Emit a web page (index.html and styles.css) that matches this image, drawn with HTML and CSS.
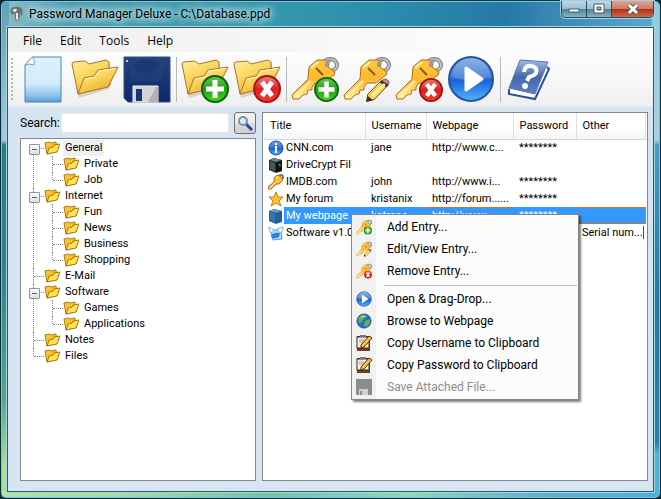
FILE: index.html
```
<!DOCTYPE html>
<html lang="en">
<head>
<meta charset="utf-8">
<title>Password Manager Deluxe</title>
<link rel="stylesheet" href="styles.css">
</head>
<body>

<svg class="defs" aria-hidden="true">
  <defs>
    <linearGradient id="gGold" x1="0" y1="0" x2="0.6" y2="1"><stop offset="0" stop-color="#fff0a0"/><stop offset=".5" stop-color="#fbd55e"/><stop offset="1" stop-color="#e9a92b"/></linearGradient>
    <linearGradient id="gKey" x1="0" y1="0" x2="0" y2="1"><stop offset="0" stop-color="#ffc83c"/><stop offset=".5" stop-color="#fdb92f"/><stop offset="1" stop-color="#fff0a0"/></linearGradient>
    <linearGradient id="gPage" x1="0" y1="0" x2="0" y2="1"><stop offset="0" stop-color="#dcf1fb"/><stop offset=".6" stop-color="#d0ecfb"/><stop offset=".85" stop-color="#8fc3ee"/><stop offset="1" stop-color="#5a9ddb"/></linearGradient>
    <linearGradient id="gNavy" x1="0" y1="0" x2="0" y2="1"><stop offset="0" stop-color="#24427f"/><stop offset="1" stop-color="#0b2768"/></linearGradient>
    <linearGradient id="gBook" x1="0" y1="0" x2="0" y2="1"><stop offset="0" stop-color="#9dbbe4"/><stop offset=".5" stop-color="#4668ac"/><stop offset="1" stop-color="#5d80c4"/></linearGradient>
    <linearGradient id="gPlay" x1="0" y1="0" x2="0" y2="1"><stop offset="0" stop-color="#7ba8e6"/><stop offset=".48" stop-color="#3473d0"/><stop offset=".52" stop-color="#1561dc"/><stop offset="1" stop-color="#52b4fb"/></linearGradient>
    <linearGradient id="gGreen" x1="0" y1="0" x2="0" y2="1"><stop offset="0" stop-color="#6cc862"/><stop offset=".5" stop-color="#20a010"/><stop offset="1" stop-color="#46d81c"/></linearGradient>
    <linearGradient id="gRed" x1="0" y1="0" x2="0" y2="1"><stop offset="0" stop-color="#f08080"/><stop offset=".5" stop-color="#dd2020"/><stop offset="1" stop-color="#fb3a30"/></linearGradient>
  </defs>

  <symbol id="folder" viewBox="0 0 48 48">
    <path d="M2 9 L15 6 L19 9 L38 5 L39 12 L46 12 L38 33 L8 42 Z" fill="#7c4a10" opacity=".2" transform="translate(0 1)"/>
    <path d="M1 9 Q1 7 3 7 L14 6 L18 9 L35 5 L38 7 L39 30 L7 39 Z" fill="url(#gGold)" stroke="#a9742a"/>
    <path d="M7 39 L13 23 L23 21 L27 15 L47 12 L37 32 Z" fill="url(#gGold)" stroke="#a9742a"/>
    <path d="M14 24 L24 22 L28 16 L45 13.500" fill="none" stroke="#fff8cc"/>
  </symbol>

  <symbol id="folderSmall" viewBox="0 0 16 16">
    <path d="M1 3 L5 2 L7 3 L12 2 L13 11 L3 14 Z" fill="#f6c62c" stroke="#b07818"/>
    <path d="M3 14 L5 8 L9 7 L10 5 L16 4 L13 12 Z" fill="#ffe34e" stroke="#a9701a"/>
  </symbol>

  <symbol id="key" viewBox="0 0 48 48">
    <ellipse cx="39" cy="10" rx="7" ry="6" fill="none" stroke="#777" stroke-width="4"/>
    <ellipse cx="39" cy="10" rx="7" ry="6" fill="none" stroke="#c6c6c6" stroke-width="2"/>
    <path d="M18 12 L26 5 L35 5 L38 8 L37 12 L44 17 L43 20 L33 28 L24 28 L21 32 L21 35 L17 35 L16 39 L12 40 L8 44 L2 44 L1 40 L17 24 Z" fill="url(#gKey)" stroke="#b4691a"/>
    <path d="M25 13 L32 20" stroke="#8a5a20" stroke-width="2"/>
    <path d="M4 42 L20 26 M20 13 L27 7" stroke="#fff3b0" stroke-width="2"/>
    <path d="M36 12 Q34 7 40 5" fill="none" stroke="#999" stroke-width="3"/>
  </symbol>

  <symbol id="keySmall" viewBox="0 0 16 16">
    <ellipse cx="13" cy="3" rx="2" ry="2" fill="none" stroke="#777" stroke-width="2"/>
    <path d="M6 4 L9 1 L12 2 L15 6 L11 10 L8 10 L3 15 L0 15 L0 13 L6 8 Z" fill="#fcbc3c" stroke="#b06a1c"/>
    <path d="M2 14 L7 9 M8 4 L10 3" stroke="#fff0a0"/>
  </symbol>

  <symbol id="plus" viewBox="0 0 28 28">
    <circle cx="14" cy="14" r="13" fill="url(#gGreen)" stroke="#0a6410" stroke-width="2"/>
    <path d="M14 5 V23 M5 14 H23" stroke="#fff" stroke-width="5"/>
  </symbol>

  <symbol id="cross" viewBox="0 0 28 28">
    <circle cx="14" cy="14" r="13" fill="url(#gRed)" stroke="#a81018" stroke-width="2"/>
    <path d="M9 7 L19 21 M19 7 L9 21" stroke="#fff" stroke-width="5"/>
  </symbol>

  <symbol id="pencil" viewBox="0 0 28 28">
    <path d="M2 19 L18 3 L26 8 L10 25 L1 27 Z" fill="#fbd052" stroke="#4a3a18"/>
    <path d="M18 3 L23 1 L27 4 L26 8 Z" fill="#d88" stroke="#555"/>
    <path d="M16 5 L18 3 L26 8 L24 11 Z" fill="#333"/>
    <path d="M7 21 L22 7" stroke="#fff2a0" stroke-width="3"/>
    <path d="M0 28 L2 21 L8 26 Z" fill="#332c22"/>
  </symbol>

  <symbol id="keyAdd" viewBox="0 0 48 48"><use href="#key" width="48" height="48"/><use href="#plus" x="23" y="22" width="25" height="25"/></symbol>
  <symbol id="keyEdit" viewBox="0 0 48 48"><use href="#key" width="48" height="48"/><use href="#pencil" x="23" y="23" width="24" height="24"/></symbol>
  <symbol id="keyDel" viewBox="0 0 48 48"><use href="#key" width="48" height="48"/><use href="#cross" x="24" y="23" width="24" height="24"/></symbol>

  <symbol id="play" viewBox="0 0 48 48">
    <circle cx="24" cy="24" r="22" fill="url(#gPlay)" stroke="#25549f" stroke-width="2"/>
    <path d="M5 22 A19 19 0 0 1 43 22 Q24 29 5 22 Z" fill="#fff" opacity=".15"/>
    <path d="M19 13 L35 24 L19 35 Z" fill="#fff" stroke="#fff" stroke-width="3" stroke-linejoin="round"/>
  </symbol>

  <symbol id="floppy" viewBox="0 0 48 48">
    <path d="M1 2 H47 V47 H5 L1 43 Z" fill="url(#gNavy)" stroke="#31507f"/>
    <path d="M8 3 H40 V27 H8 Z" fill="#27477e" opacity=".4"/>
    <ellipse cx="24" cy="11" rx="13" ry="7" fill="#1d3974"/>
    <rect x="3" y="5" width="2" height="2" fill="#ccd"/>
    <path d="M10 31 H35 V47 H10 Z" fill="#d4d4d4" stroke="#eee"/>
    <rect x="13" y="34" width="6" height="12" fill="#1a3577"/>
    <path d="M25 47 L33 32 H35 V47 Z" fill="#b2b2b2"/>
  </symbol>

  <symbol id="floppyGray" viewBox="0 0 16 16">
    <path d="M0 0 H16 V16 H1 L0 15 Z" fill="#8c8c8c"/>
    <rect x="3" y="10" width="9" height="6" fill="#d2d2d2"/><rect x="4" y="12" width="2" height="4" fill="#8c8c8c"/>
  </symbol>

  <symbol id="safe" viewBox="0 0 16 16">
    <path d="M1 3 L6 1 L14 3 L14 14 L8 16 L1 13 Z" fill="#222e30"/>
    <path d="M2 4 L7 6 V14 L2 12 Z" fill="#46565a"/>
    <path d="M8 6 L14 4 V14 L8 15 Z" fill="#0b1112"/>
    <path d="M2 3 L6 1 L13 3 L8 5 Z" fill="#718084"/>
    <path d="M10 8 L12 7 V10" stroke="#4b9361" fill="none"/>
  </symbol>

  <symbol id="clip" viewBox="0 0 16 16">
    <rect x="1" y="1" width="13" height="15" fill="#6c3f20"/>
    <rect x="1" y="2" width="12" height="11" fill="#f7f3ea" stroke="#3d2616"/>
    <rect x="4" y="0" width="6" height="2" fill="#777"/>
    <path d="M3 5 H8 M3 7 H7" stroke="#999"/>
    <path d="M5 10 L13 1 L16 3 L8 12 L5 13 Z" fill="#fbc634" stroke="#3f2c10"/>
  </symbol>
</svg>

<div class="window">
  <header class="titlebar">
    <svg class="app-icon" viewBox="0 0 16 16"><path d="M1 5 Q2 1 6 1 Q10 0 13 3 L14 8 L12 10 L11 6 L10 15 L6 15 L6 7 L3 9 Z" fill="#6b7072"/><path d="M3 5 Q5 2 8 3 L7 6 Z M7 7 H9 V13 H7 Z" fill="#e6e9e9"/><path d="M5 13 H11 V16 H5 Z" fill="#9aa0a2"/></svg>
    <h1 class="title">Password Manager Deluxe - C:\Database.ppd</h1>
    <div class="controls">
      <button class="control" aria-label="Minimize"><svg viewBox="0 0 14 12"><rect x="2" y="6" width="10" height="3" fill="#fff" stroke="#555a66"/></svg></button>
      <button class="control" aria-label="Maximize"><svg viewBox="0 0 14 12"><path d="M2 1 H12 V10 H2 Z M5 4 V7 H9 V4 Z" fill="#fff" fill-rule="evenodd" stroke="#4f5664"/></svg></button>
      <button class="control close" aria-label="Close"><svg viewBox="0 0 14 12"><path d="M3 2 L11 10 M11 2 L3 10" stroke="#555" stroke-width="5"/><path d="M3 2 L11 10 M11 2 L3 10" stroke="#fff" stroke-width="3"/></svg></button>
    </div>
  </header>

  <div class="client">
    <nav class="menubar">
      <button>File</button>
      <button>Edit</button>
      <button>Tools</button>
      <button>Help</button>
    </nav>

    <div class="toolbar">
      <span class="grip"></span>
      <button class="tool" aria-label="New database"><svg viewBox="0 0 48 48"><path d="M13 2 H42 V47 H6 V10 Z" fill="url(#gPage)" stroke="#4c86b4"/><path d="M13 2 Q17 5 15 10 Q10 8 6 10 Z" fill="#fff" stroke="#6da2c8"/></svg></button>
      <button class="tool" aria-label="Open database"><svg><use href="#folder"/></svg></button>
      <button class="tool" aria-label="Save database"><svg><use href="#floppy"/></svg></button>
      <span class="divider"></span>
      <button class="tool" aria-label="Add folder"><svg viewBox="0 0 48 48"><use href="#folder" width="48" height="48"/><use href="#plus" x="20" y="20" width="28" height="28"/></svg></button>
      <button class="tool" aria-label="Remove folder"><svg viewBox="0 0 48 48"><use href="#folder" width="48" height="48"/><use href="#cross" x="20" y="20" width="28" height="28"/></svg></button>
      <span class="divider"></span>
      <button class="tool" aria-label="Add entry"><svg><use href="#keyAdd"/></svg></button>
      <button class="tool" aria-label="Edit entry"><svg><use href="#keyEdit"/></svg></button>
      <button class="tool" aria-label="Remove entry"><svg><use href="#keyDel"/></svg></button>
      <button class="tool" aria-label="Open"><svg><use href="#play"/></svg></button>
      <span class="divider"></span>
      <button class="tool" aria-label="Help"><svg viewBox="0 0 48 48">
        <path d="M4 34 L4 39 L30 44 L44 14 L42 12" fill="#fff" stroke="#2d4f94" stroke-width="2"/>
        <path d="M15 5 L43 7 L30 39 L4 33 Z" fill="url(#gBook)" stroke="#5577b4"/>
        <path d="M19 17 Q20 10 26 11 Q33 12 31 18 Q29 21 24 22 L22 26" fill="none" stroke="#fff" stroke-width="4"/><circle cx="20" cy="31" r="3" fill="#fff"/></svg></button>
    </div>

    <main class="body">
      <section class="side">
        <div class="search">
          <label for="search">Search:</label>
          <input id="search" type="text">
          <button aria-label="Search"><svg viewBox="0 0 18 18"><path d="M10 10 L16 16" stroke="#1c4a9c" stroke-width="3"/><circle cx="7" cy="7" r="4" fill="#cfeafa" stroke="#7892a8" stroke-width="2"/><path d="M5 7 Q5 5 7 5" stroke="#fff" fill="none"/></svg></button>
        </div>
        <ul class="tree">
          <li class="open"><div class="node current"><svg><use href="#folderSmall"/></svg><span>General</span></div>
            <ul>
              <li><div class="node"><svg><use href="#folderSmall"/></svg><span>Private</span></div></li>
              <li><div class="node"><svg><use href="#folderSmall"/></svg><span>Job</span></div></li>
            </ul>
          </li>
          <li class="open"><div class="node"><svg><use href="#folderSmall"/></svg><span>Internet</span></div>
            <ul>
              <li><div class="node"><svg><use href="#folderSmall"/></svg><span>Fun</span></div></li>
              <li><div class="node"><svg><use href="#folderSmall"/></svg><span>News</span></div></li>
              <li><div class="node"><svg><use href="#folderSmall"/></svg><span>Business</span></div></li>
              <li><div class="node"><svg><use href="#folderSmall"/></svg><span>Shopping</span></div></li>
            </ul>
          </li>
          <li><div class="node"><svg><use href="#folderSmall"/></svg><span>E-Mail</span></div></li>
          <li class="open"><div class="node"><svg><use href="#folderSmall"/></svg><span>Software</span></div>
            <ul>
              <li><div class="node"><svg><use href="#folderSmall"/></svg><span>Games</span></div></li>
              <li><div class="node"><svg><use href="#folderSmall"/></svg><span>Applications</span></div></li>
            </ul>
          </li>
          <li><div class="node"><svg><use href="#folderSmall"/></svg><span>Notes</span></div></li>
          <li><div class="node"><svg><use href="#folderSmall"/></svg><span>Files</span></div></li>
        </ul>
      </section>

      <section class="list">
        <table>
          <colgroup><col class="c-title"><col class="c-user"><col class="c-web"><col class="c-pass"><col></colgroup>
          <thead>
            <tr><th>Title</th><th>Username</th><th>Webpage</th><th>Password</th><th>Other</th></tr>
          </thead>
          <tbody>
            <tr><td><div class="entry"><svg viewBox="0 0 16 16"><circle cx="8" cy="8" r="7" fill="url(#gPlay)" stroke="#1748a0"/><path d="M8 3 V5 M8 6 V13" stroke="#fff" stroke-width="2"/></svg><span>CNN.com</span></div></td><td>jane</td><td>http://www.c...</td><td>********</td><td></td></tr>
            <tr><td><div class="entry"><svg><use href="#safe"/></svg><span>DriveCrypt Fil</span></div></td><td></td><td></td><td></td><td></td></tr>
            <tr><td><div class="entry"><svg><use href="#keySmall"/></svg><span>IMDB.com</span></div></td><td>john</td><td>http://www.i...</td><td>********</td><td></td></tr>
            <tr><td><div class="entry"><svg viewBox="0 0 16 16"><path d="M8 1 L10 6 L15 6 L11 10 L13 15 L8 12 L3 15 L5 10 L1 6 L6 6 Z" fill="#fdc72e" stroke="#cf7d12"/></svg><span>My forum</span></div></td><td>kristanix</td><td>http://forum......</td><td>********</td><td></td></tr>
            <tr class="selected"><td><div class="entry"><svg viewBox="0 0 16 16"><path d="M1 3 L6 1 L14 3 L14 14 L8 16 L1 13 Z" fill="#21619e"/><path d="M2 4 L7 6 V14 L2 12 Z" fill="#3978ad"/><path d="M2 3 L6 1 L13 3 L8 5 Z" fill="#5a9cca"/></svg><span>My webpage</span></div></td><td>katrena</td><td>http://www...</td><td>********</td><td></td></tr>
            <tr><td><div class="entry"><svg viewBox="0 0 16 16"><path d="M2 5 L13 5 L14 14 L5 15 Z" fill="#b9dcf6" stroke="#5f9ed6"/><path d="M1 2 L6 5 L4 8 L1 5 Z M15 2 L9 4 L12 8 L15 5 Z" fill="#eef6fc" stroke="#8ab4d4"/><path d="M3 10 Q7 7 12 8 L11 12 Q7 14 4 13 Z" fill="#2382dc"/></svg><span>Software v1.0</span></div></td><td></td><td></td><td></td><td><span class="caret">Serial num...</span></td></tr>
          </tbody>
        </table>

        <menu class="context">
          <li><button><svg><use href="#keyAdd"/></svg>Add Entry...</button></li>
          <li><button><svg><use href="#keyEdit"/></svg>Edit/View Entry...</button></li>
          <li><button><svg><use href="#keyDel"/></svg>Remove Entry...</button></li>
          <li class="rule"></li>
          <li><button><svg><use href="#play"/></svg>Open &amp; Drag-Drop...</button></li>
          <li><button><svg viewBox="0 0 16 16"><circle cx="8" cy="8" r="7" fill="#2b6ec6" stroke="#2a56a0"/><path d="M2 6 Q5 1 9 2 L11 4 L7 6 L6 9 L3 10 Z M9 8 L14 6 L14 10 L10 14 L8 12 Z" fill="#5cb457"/><path d="M5 4 L9 3" stroke="#cfe9e0"/></svg>Browse to Webpage</button></li>
          <li><button><svg><use href="#clip"/></svg>Copy Username to Clipboard</button></li>
          <li><button><svg><use href="#clip"/></svg>Copy Password to Clipboard</button></li>
          <li><button disabled><svg><use href="#floppyGray"/></svg>Save Attached File...</button></li>
        </menu>
      </section>
    </main>
  </div>
</div>

</body>
</html>
```
FILE: styles.css
```
* {
  box-sizing: border-box;
}

body {
  margin: 0;
  background: #10242c;
  font-family: Roboto, "Open Sans", sans-serif;
  font-size: 12px;
  color: #000;
}

button {
  margin: 0;
  padding: 0;
  border: 0;
  background: none;
  font: inherit;
  color: inherit;
}

svg {
  display: block;
}

.defs {
  position: absolute;
  width: 0;
  height: 0;
}

/* window frame */
.window {
  display: flex;
  flex-direction: column;
  height: 100vh;
  padding: 0 6px 6px;
  border: 1px solid #0d2c38;
  border-bottom-color: #123;
  border-radius: 6px;
  box-shadow: inset 0 0 0 1px #5bd0ee;
  background:
    linear-gradient(90deg, #b0e59a, #a5dba0 20%, #74c5a4 40%, #7ccbbb 50%, #8ddab5 62%, #5fafd0 82%, #4ab0dc) bottom / 100% 8px no-repeat,
    linear-gradient(180deg, #5f9fb8, #a8cbdb 28%, #1f7f8c 29%, #2c8589 55%, #58a688 80%, #a9e296 94%) left / 8px 100% no-repeat,
    linear-gradient(180deg, #8fcbe2, #a9cfe2 28%, #3fa0ca 29%, #1a7ba5 60%, #2484ae 89%, #4bb4e0 91%) right / 8px 100% no-repeat,
    linear-gradient(95deg, #8dbfc8, #4d9fae 10%, #399aac 35%, #2d91ae 50%, #2679a6 72%, #5aa5cb 92%, #6fbfe0);
}

.titlebar {
  display: flex;
  align-items: center;
  height: 26px;
  flex: none;
}

.app-icon {
  width: 16px;
  height: 16px;
  margin-left: 2px;
}

.title {
  flex: 1;
  margin: 0 0 0 4px;
  font-size: 12px;
  font-weight: 400;
  text-shadow: 0 0 6px #d5ecf2, 0 0 8px #d5ecf2, 0 0 10px #d5ecf2;
}

.controls {
  display: flex;
  align-self: flex-start;
  border: 1px solid #2c4a5c;
  border-top: 0;
  border-radius: 0 0 5px 5px;
  overflow: hidden;
  box-shadow: 0 0 0 1px #9fd0e4;
}

.control {
  display: flex;
  align-items: center;
  justify-content: center;
  width: 25px;
  height: 16px;
  border-right: 1px solid #2c4a5c;
  background: linear-gradient(#bfd9e4, #9ac0d0 48%, #517f93 50%, #85b4c6);
}

.control svg {
  width: 14px;
  height: 12px;
}

.control.close {
  width: 41px;
  border: 0;
  background: linear-gradient(#e0a594, #cf7a66 48%, #ab3019 50%, #cb6a48);
}

.client {
  display: flex;
  flex-direction: column;
  flex: 1;
  min-height: 0;
  border: 1px solid #2b5a66;
  box-shadow: 0 0 0 1px #a5d8e4;
  background: #d7e4f2;
}

.menubar {
  display: flex;
  gap: 18px;
  height: 24px;
  flex: none;
  padding: 0 15px;
  background: linear-gradient(90deg, #efefef, #fcfcfc 75%);
  font-family: "Open Sans", sans-serif;
}

/* toolbar */
.toolbar {
  display: flex;
  align-items: center;
  height: 55px;
  flex: none;
  border-bottom: 1px solid #e6ecf2;
  background: linear-gradient(#fdfdfd, #f7f7f7 50%, #efefef);
}

.grip {
  width: 2px;
  height: 43px;
  margin: 0 4px 0 3px;
  background: repeating-linear-gradient(#b8b8b8 0 2px, transparent 2px 4px);
}

.tool {
  display: flex;
  justify-content: center;
  width: 52px;
}

.tool svg {
  width: 48px;
  height: 48px;
}

.divider {
  width: 1px;
  height: 45px;
  margin: 0 2px 0 3px;
  background: #b9b9b9;
}

.body {
  display: flex;
  gap: 6px;
  flex: 1;
  min-height: 0;
  padding: 5px 5px 10px 12px;
}

.side {
  display: flex;
  flex-direction: column;
  gap: 4px;
  width: 236px;
  flex: none;
}

.search {
  display: flex;
  align-items: center;
  height: 22px;
}

.search label {
  width: 41px;
  white-space: nowrap;
}

.search input {
  flex: 1;
  min-width: 0;
  height: 20px;
  margin-right: 5px;
  border: 1px solid #e3e9ef;
  border-radius: 2px;
  background: #fff;
}

.search button {
  width: 22px;
  height: 22px;
  padding: 1px;
  border: 1px solid #707070;
  border-radius: 3px;
  background: linear-gradient(#f2f2f2, #ebebeb 50%, #ddd 50%, #cfcfcf);
}

.search svg {
  width: 18px;
  height: 18px;
}

/* folder tree */
.tree {
  flex: 1;
  margin: 0;
  padding: 1px 0 0 8px;
  border: 1px solid #828790;
  background: #fff;
  font-size: 11px;
  list-style: none;
}

.tree ul {
  margin: 0;
  padding: 0 0 0 19px;
  list-style: none;
}

.tree li {
  position: relative;
}

/* dotted guide lines */
.tree li::before {
  content: "";
  position: absolute;
  top: 0;
  bottom: 0;
  left: 4px;
  border-left: 1px dotted #888;
}

.tree > li:first-child::before {
  top: 8px;
}

.tree li:last-child::before {
  bottom: auto;
  height: 8px;
}

.node {
  display: flex;
  align-items: center;
  height: 16px;
  padding-left: 15px;
  line-height: 16px;
}

.node::before {
  content: "";
  position: absolute;
  top: 8px;
  left: 5px;
  width: 10px;
  border-top: 1px dotted #888;
}

.open > .node::after {
  content: "";
  position: absolute;
  top: 4px;
  left: 0;
  width: 9px;
  height: 9px;
  border: 1px solid #919191;
  border-radius: 1px;
  background: linear-gradient(#4b63a7, #4b63a7) center / 5px 1px no-repeat, linear-gradient(#fff, #ddd);
}

.node svg {
  width: 16px;
  height: 16px;
}

.node span {
  margin-left: 3px;
  padding: 0 2px;
}

.current span {
  background: #f0f0f0;
}

/* entry list */
.list {
  position: relative;
  flex: 1;
  min-width: 0;
  padding: 0 1px;
  border: 1px solid #828790;
  background: #fff;
}

table {
  width: 100%;
  border-collapse: collapse;
  table-layout: fixed;
  font-size: 11px;
}

.c-title {
  width: 101px;
}

.c-user {
  width: 61px;
}

.c-web {
  width: 87px;
}

.c-pass {
  width: 63px;
}

th {
  height: 26px;
  padding: 0 0 0 6px;
  border-right: 1px solid #dfe0e2;
  border-bottom: 1px solid #d5d5d5;
  background: linear-gradient(#fff 50%, #f4f5f7);
  font-weight: 400;
  text-align: left;
}

td {
  height: 17px;
  padding: 0 0 0 6px;
  line-height: 16px;
  white-space: nowrap;
  overflow: hidden;
}

td:first-child {
  padding: 0 0 0 4px;
}

.entry {
  display: flex;
  align-items: center;
}

.entry svg {
  width: 16px;
  height: 16px;
  flex: none;
}

.entry span {
  flex: 1;
  padding-left: 2px;
}

.selected td {
  background:
    repeating-linear-gradient(90deg, #c8702c 0 1px, #3399ff 1px 2px) top / 100% 1px no-repeat,
    repeating-linear-gradient(90deg, #c8702c 0 1px, #3399ff 1px 2px) bottom / 100% 1px no-repeat,
    #3399ff;
  color: #fff;
}

.selected td:first-child {
  background: linear-gradient(90deg, #fff 20px, #3399ff 20px);
}

.caret {
  border-right: 1px solid #1c6a1c;
}

/* context menu over the list */
.context {
  position: absolute;
  top: 101px;
  left: 88px;
  width: 228px;
  margin: 0;
  padding: 1px;
  border: 1px solid #868686;
  background: linear-gradient(90deg, #f1f1f1 24px, #fcfcfc 24px);
  box-shadow: 2px 2px 2px rgba(0, 0, 0, .5);
  list-style: none;
}

.context button {
  display: flex;
  align-items: center;
  gap: 15px;
  width: 100%;
  height: 22px;
  padding-left: 3px;
  white-space: nowrap;
}

.context svg {
  width: 16px;
  height: 16px;
}

.context button:disabled {
  color: #8d8d8d;
}

.rule {
  height: 6px;
  margin-left: 31px;
  background: linear-gradient(#bdbdbd, #bdbdbd) center / 100% 1px no-repeat;
}
```
